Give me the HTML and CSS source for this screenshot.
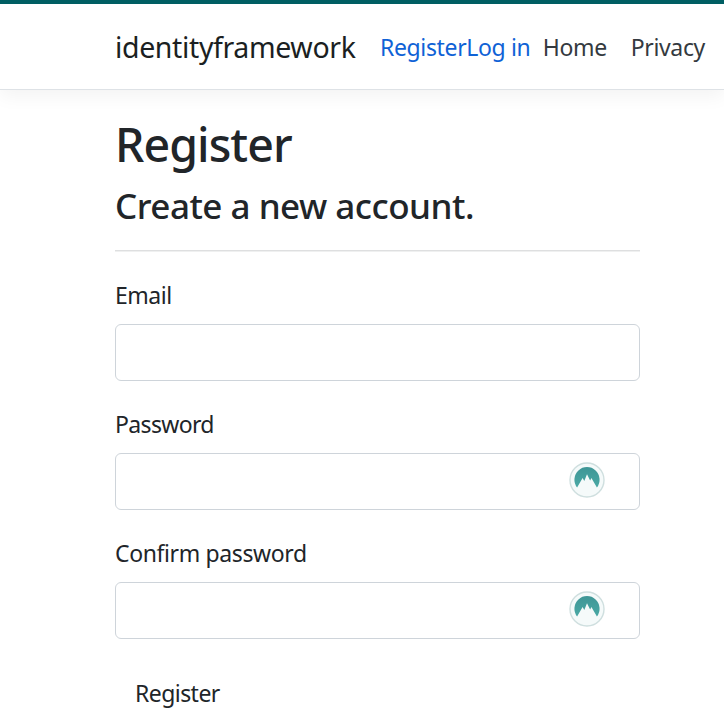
FILE: index.html
```html
<!DOCTYPE html>
<html lang="en">
<head>
<meta charset="utf-8">
<title>Register - identityframework</title>
<link rel="stylesheet" href="styles.css">
</head>
<body>
<svg class="symbols" width="0" height="0" aria-hidden="true">
  <defs>
    <linearGradient id="teal" x1="0" y1="0" x2="0" y2="1"><stop offset="0" stop-color="#3f9696"/><stop offset="1" stop-color="#4aa9a5"/></linearGradient>
    <symbol id="mountain" viewBox="0 0 36 36">
      <circle cx="18" cy="18" r="17" fill="#f5fafa" stroke="#cfdfdf" stroke-width="1.4"/>
      <path d="M8.1 25.5A12.6 12.6 0 1 1 27.9 25.5L22.4 16L21.2 18.6L20.6 17.6L18 12.2L15.3 19L13.6 16Z" fill="url(#teal)"/>
    </symbol>
  </defs>
</svg>
<header class="header">
  <nav class="nav">
    <a class="brand">identityframework</a>
    <a class="link register">Register</a><a class="link login">Log in</a>
    <a class="link home">Home</a>
    <a class="link privacy">Privacy</a>
  </nav>
</header>
<main class="content">
  <h1 class="title">Register</h1>
  <h2 class="subtitle">Create a new account.</h2>
  <hr class="rule">
  <form class="form">
    <div class="group">
      <label class="label email" for="email">Email</label>
      <div class="field"><input id="email" class="input" type="email"></div>
    </div>
    <div class="group">
      <label class="label password" for="password">Password</label>
      <div class="field"><input id="password" class="input" type="password"><svg class="badge"><use href="#mountain"/></svg></div>
    </div>
    <div class="group">
      <label class="label confirm" for="confirm">Confirm password</label>
      <div class="field"><input id="confirm" class="input" type="password"><svg class="badge"><use href="#mountain"/></svg></div>
    </div>
    <button class="submit" type="button">Register</button>
  </form>
</main>
</body>
</html>
```
FILE: styles.css
```css
* { box-sizing: border-box; }
body {
  margin: 0;
  height: 726px;
  overflow: hidden;
  background: #fff;
  color: #212529;
  font: 23px/36px "Noto Sans", sans-serif;
}
.symbols { display: block; }
.header {
  height: 90px;
  border-top: 4px solid #005e63;
  border-bottom: 1px solid #dee2e6;
  box-shadow: 0 6px 18px rgba(0, 0, 0, .05);
}
.nav {
  display: flex;
  align-items: center;
  height: 85px;
  padding-left: 115px;
  white-space: nowrap;
}
.brand {
  width: 265px;
  font-size: 28.5px;
  letter-spacing: -.37px;
  color: #1b1f22;
}
.link { color: #343a40; letter-spacing: -.36px; }
.link.register, .link.login { color: #0f62d6; }
.login { width: 76.5px; }
.home { width: 88px; }
.content { width: 525px; margin-left: 115px; }
.title, .subtitle { margin: 0; font-weight: 500; white-space: nowrap; }
.title { padding-top: 22px; font-size: 46.5px; line-height: 64px; letter-spacing: -.95px; }
.subtitle { padding-top: 7px; font-size: 35px; line-height: 46px; letter-spacing: -.5px; }
.rule {
  height: 2px;
  margin: 21px 0 25px;
  border: 0;
  border-top: 1px solid #dedfe0;
  background: #eff0f0;
}
.group { margin-bottom: 25px; }
.label { display: block; height: 36px; margin-bottom: 11px; }
.email { letter-spacing: -.5px; }
.password { letter-spacing: -.65px; }
.confirm { letter-spacing: -.38px; }
.field { position: relative; height: 57px; }
.input {
  display: block;
  width: 100%;
  height: 57px;
  padding: 9px 18px;
  border: 1px solid #ced4da;
  border-radius: 6px;
  background: #fff;
  font: inherit;
  outline: 0;
}
.badge { position: absolute; top: 9px; right: 35px; width: 36px; height: 36px; }
.submit {
  display: block;
  height: 57px;
  padding: 0 20px;
  border: 0;
  background: transparent;
  color: #212529;
  font: inherit;
  letter-spacing: -.55px;
}
```
